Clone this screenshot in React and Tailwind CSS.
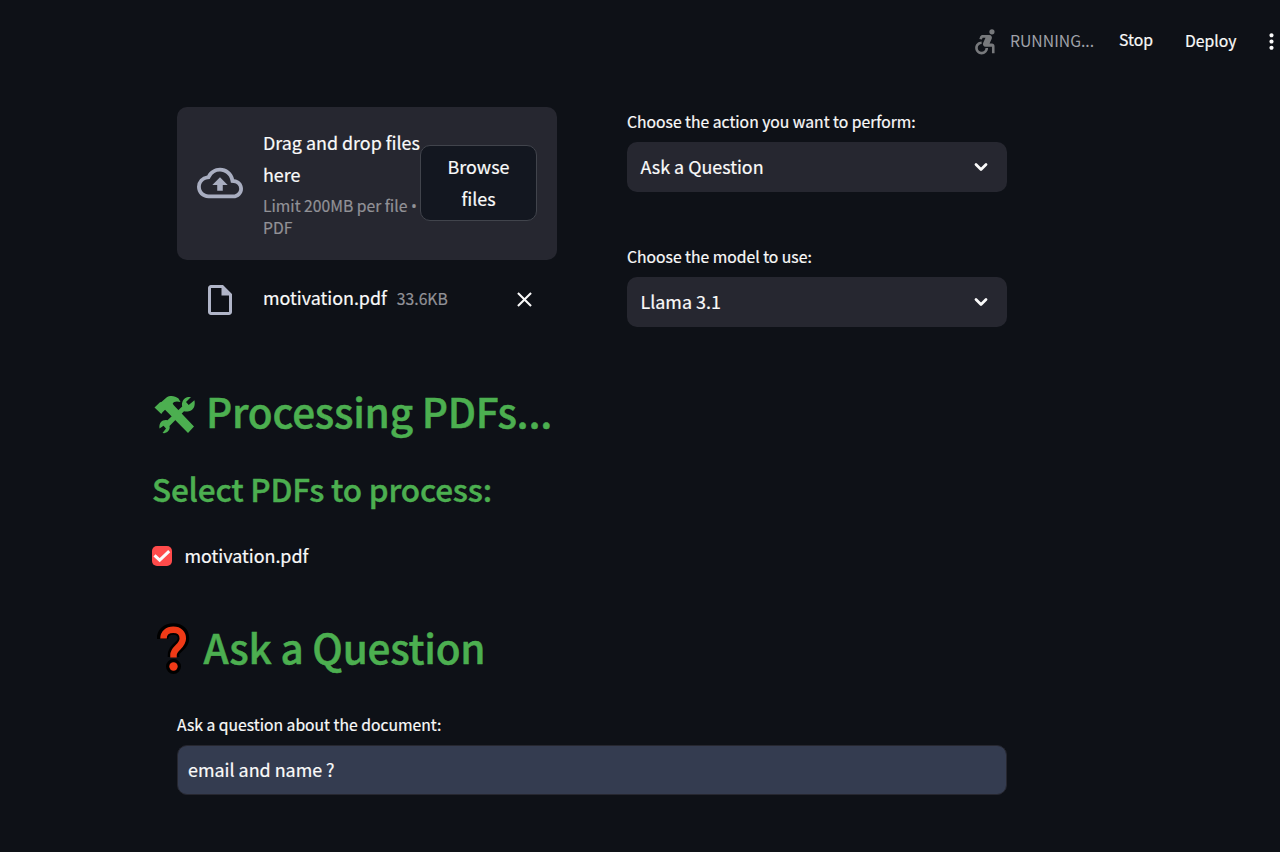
import { MdAccessibleForward, MdClose, MdOutlineInsertDriveFile, MdMoreVert } from "react-icons/md";

function CloudUploadIcon() {
  return (
    <svg viewBox="0 0 24 24" className="size-[46px] shrink-0 fill-[#a9aec1]">
      <path d="M19.35 10.04A7.49 7.49 0 0 0 12 4C9.11 4 6.6 5.64 5.35 8.04A5.994 5.994 0 0 0 0 14c0 3.31 2.69 6 6 6h13c2.76 0 5-2.24 5-5 0-2.64-2.05-4.78-4.65-4.96zM19 18H6c-2.21 0-4-1.79-4-4 0-2.05 1.53-3.76 3.56-3.97l1.07-.11.5-.95A5.469 5.469 0 0 1 12 6c2.62 0 4.88 1.86 5.39 4.43l.3 1.5 1.53.11A2.98 2.98 0 0 1 22 15c0 1.65-1.35 3-3 3zM8 13h2.55v3h2.9v-3H16l-4-4z" />
    </svg>
  );
}

function ToolsIcon() {
  return (
    <svg viewBox="0 0 42 40" className="mt-0.5 ml-0.5 h-10 w-[42px] shrink-0 text-[#4caf50]" fill="currentColor">
      <path d="M0.5 12.500 6 7.300 7.400 7 12.500 2.400C16 .2 21 .6 24.500 3.500L26.500 7C22.500 5.800 19.500 6.500 18.700 8.800L20 10.500 40 31.600 34 38 13.300 17 11 14.800 8.300 17.500 7.300 19Z" />
      <path d="M37 1.900 32 7 34.700 10 40.400 5.200C41.400 9.500 40.200 13.800 37 15.600 34.500 16.900 31.500 16.600 30 16.300L15.500 31C16.500 34 14 37.600 10.300 38.200L8.500 38 12 33.600 9.500 30.800 5.500 33.400C4.800 28.500 7.500 25 12 25L13.500 25.200 28.200 11.500C27.200 7.500 29.500 2.500 34 1.900Z" />
    </svg>
  );
}

function QuestionMarkIcon() {
  return (
    <svg viewBox="0 0 34 52" className="h-[52px] w-[34px] shrink-0" fill="none">
      <g stroke="#000000">
        <path d="M5.500 16C5.500 9.500 10 6 16.500 6C23 6 26.500 10 26.500 15.500C26.500 24 16.500 24 16.500 32V34" strokeWidth="11.500" strokeLinejoin="round" />
        <circle cx="16.500" cy="43.500" r="5.500" strokeWidth="4" />
      </g>
      <path d="M6.500 15.500C6.500 10 10.500 6.800 16.300 6.800C22.500 6.800 25.800 10.500 25.800 15.500C25.800 23.500 16.500 25 16.500 32V34.500" stroke="#f03a17" strokeWidth="6.500" />
      <circle cx="16.500" cy="43.500" r="4.200" fill="#f03a17" />
    </svg>
  );
}

function Chevron() {
  return (
    <svg viewBox="0 0 20 20" className="size-5" fill="none" stroke="#fafafa" strokeWidth="2.8" strokeLinecap="round" strokeLinejoin="round">
      <path d="M5 7.500 10 12.500 15 7.500" />
    </svg>
  );
}

function Select({ label, value }) {
  return (
    <div>
      <div className="h-[35px] text-[15.7px] leading-[30px] whitespace-nowrap">{label}</div>
      <button className="flex h-[50px] w-full items-center justify-between rounded-[10px] bg-[#262730] pr-4 pl-[13.5px] text-[17.9px]">
        <span className="pb-0.5 whitespace-nowrap">{value}</span>
        <Chevron />
      </button>
    </div>
  );
}

export default function App() {
  return (
    <div className="h-[852px] overflow-hidden bg-[#0e1117] font-['Noto_Sans_CJK_SC',sans-serif] text-[#fafafa] [-webkit-text-stroke:0.2px]">
      <header className="flex h-[83px] items-center justify-end text-[15.75px] whitespace-nowrap">
        <MdAccessibleForward className="mr-[9px] size-[31px] text-[#77797c] [stroke-width:0]" />
        <span className="w-[109px] pb-0.5 text-[#a0a2a9] [-webkit-text-stroke:0px]">RUNNING...</span>
        <span className="w-[66px] pb-[3px]">Stop</span>
        <span className="w-[74px] pb-0.5">Deploy</span>
        <MdMoreVert className="-mr-1 size-[25px]" />
      </header>

      <main className="ml-[152px] w-[880px] pt-6">
        <section className="flex h-[271px] gap-[70px] pl-[25px]">
          <div className="w-[380px]">
            <div className="flex h-[153px] items-center rounded-[10px] bg-[#262730] px-5 pb-0.5">
              <CloudUploadIcon />
              <div className="ml-5 w-[157px] pb-px whitespace-nowrap">
                <div className="text-[17.9px] leading-8">Drag and drop files<br />here</div>
                <div className="mt-[5px] text-[15.7px] leading-[22px] text-[#929297]">
                  Limit 200MB per file <span className="font-['Open_Sans',sans-serif]">•</span><br />PDF
                </div>
              </div>
              <button className="h-[76px] w-[117px] shrink-0 rounded-[10px] border border-[#41444c] bg-[#131720] pb-0.5 text-[17.9px] leading-8">
                Browse<br />files
              </button>
            </div>
            <div className="mt-5 flex h-10 items-center pr-5 pl-[25px]">
              <MdOutlineInsertDriveFile className="size-9 text-[#b0b5c8] [stroke-width:0]" />
              <span className="ml-[25px] pb-1.5 text-[17.9px]">motivation.pdf</span>
              <span className="ml-2.5 pb-0.5 text-[15.7px] text-[#929297]">33.6KB</span>
              <MdClose className="mb-0.5 ml-auto size-[25px]" />
            </div>
          </div>
          <div className="flex w-[380px] flex-col gap-[50px]">
            <Select label="Choose the action you want to perform:" value="Ask a Question" />
            <Select label="Choose the model to use:" value="Llama 3.1" />
          </div>
        </section>

        <h1 className="flex h-[72px] items-center gap-2.5 text-[40.5px] font-medium tracking-[-0.25px] whitespace-nowrap text-[#4caf50] [-webkit-text-stroke:0.5px]">
          <ToolsIcon />
          <span className="pb-1.5">Processing PDFs...</span>
        </h1>
        <h2 className="mt-2 flex h-[66px] items-center pb-1 text-[31.5px] font-medium tracking-[-0.2px] whitespace-nowrap text-[#4caf50] [-webkit-text-stroke:0.4px]">
          Select PDFs to process:
        </h2>
        <label className="mt-[15px] flex h-[34px] items-center gap-[12.5px] text-[17.9px]">
          <span className="flex size-5 items-center justify-center rounded-[5px] bg-[#ff4b4b]">
            <svg viewBox="0 0 20 20" className="size-5" fill="none" stroke="#fafafa" strokeWidth="3">
              <path d="M2.500 9.300 7.700 14.200 17.200 5.200" />
            </svg>
          </span>
          <span className="pb-0.5">motivation.pdf</span>
        </label>
        <h1 className="mt-10 flex h-[72px] items-center gap-[12.5px] pl-[5px] text-[40.5px] font-medium tracking-[-0.25px] whitespace-nowrap text-[#4caf50] [-webkit-text-stroke:0.5px]">
          <QuestionMarkIcon />
          <span className="pb-1">Ask a Question</span>
        </h1>
        <section className="mt-[25px] pl-[25px]">
          <div className="h-[35px] text-[15.7px] leading-[30px]">Ask a question about the document:</div>
          <div className="flex h-[50px] w-[830px] items-center rounded-[10px] border border-[#262730] bg-[#343c50] px-2.5 pb-0.5 text-[17.9px]">
            email and name ?
          </div>
        </section>
      </main>
    </div>
  );
}
